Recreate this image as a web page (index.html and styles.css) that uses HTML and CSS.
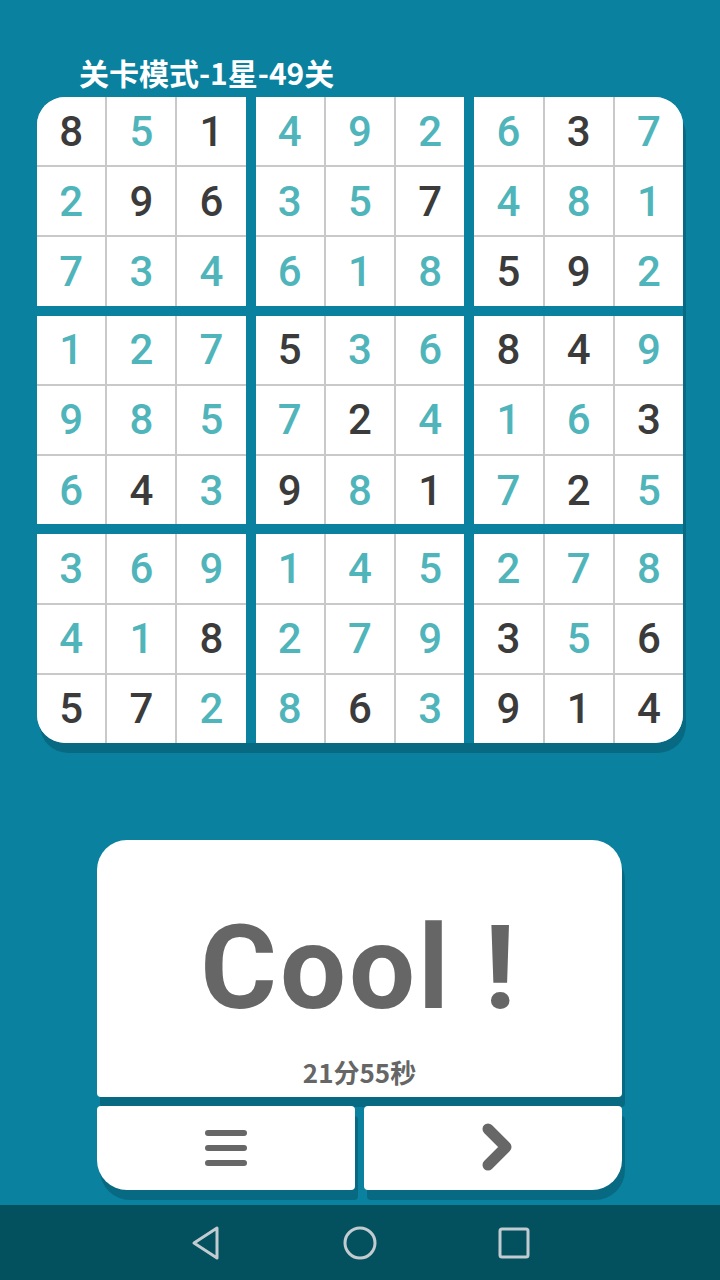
FILE: index.html
```html
<!DOCTYPE html>
<html lang="zh">
<head>
<meta charset="utf-8">
<link rel="stylesheet" href="styles.css">
</head>
<body>
<div class="screen">
  <div class="title">关卡模式-1星-49关</div>
  <div class="board">
    <div class="box"><div class="cell d">8</div><div class="cell t">5</div><div class="cell d">1</div><div class="cell t">2</div><div class="cell d">9</div><div class="cell d">6</div><div class="cell t">7</div><div class="cell t">3</div><div class="cell t">4</div></div>
    <div class="box"><div class="cell t">4</div><div class="cell t">9</div><div class="cell t">2</div><div class="cell t">3</div><div class="cell t">5</div><div class="cell d">7</div><div class="cell t">6</div><div class="cell t">1</div><div class="cell t">8</div></div>
    <div class="box"><div class="cell t">6</div><div class="cell d">3</div><div class="cell t">7</div><div class="cell t">4</div><div class="cell t">8</div><div class="cell t">1</div><div class="cell d">5</div><div class="cell d">9</div><div class="cell t">2</div></div>
    <div class="box"><div class="cell t">1</div><div class="cell t">2</div><div class="cell t">7</div><div class="cell t">9</div><div class="cell t">8</div><div class="cell t">5</div><div class="cell t">6</div><div class="cell d">4</div><div class="cell t">3</div></div>
    <div class="box"><div class="cell d">5</div><div class="cell t">3</div><div class="cell t">6</div><div class="cell t">7</div><div class="cell d">2</div><div class="cell t">4</div><div class="cell d">9</div><div class="cell t">8</div><div class="cell d">1</div></div>
    <div class="box"><div class="cell d">8</div><div class="cell d">4</div><div class="cell t">9</div><div class="cell t">1</div><div class="cell t">6</div><div class="cell d">3</div><div class="cell t">7</div><div class="cell d">2</div><div class="cell t">5</div></div>
    <div class="box"><div class="cell t">3</div><div class="cell t">6</div><div class="cell t">9</div><div class="cell t">4</div><div class="cell t">1</div><div class="cell d">8</div><div class="cell d">5</div><div class="cell d">7</div><div class="cell t">2</div></div>
    <div class="box"><div class="cell t">1</div><div class="cell t">4</div><div class="cell t">5</div><div class="cell t">2</div><div class="cell t">7</div><div class="cell t">9</div><div class="cell t">8</div><div class="cell d">6</div><div class="cell t">3</div></div>
    <div class="box"><div class="cell t">2</div><div class="cell t">7</div><div class="cell t">8</div><div class="cell d">3</div><div class="cell t">5</div><div class="cell d">6</div><div class="cell d">9</div><div class="cell d">1</div><div class="cell d">4</div></div>
  </div>
  <div class="result">
    <div class="card">
      <div class="cool">Cool !</div>
      <div class="time">21分55秒</div>
    </div>
    <div class="actions">
      <div class="btn btn-left">
        <svg width="44" height="40" viewBox="0 0 44 40"><g stroke="#676767" stroke-width="6" stroke-linecap="round"><line x1="4" y1="5" x2="40" y2="5"/><line x1="4" y1="20" x2="40" y2="20"/><line x1="4" y1="35" x2="40" y2="35"/></g></svg>
      </div>
      <div class="btn btn-right">
        <svg width="40" height="56" viewBox="0 0 40 56"><polyline points="15,9 33,27 15,45" fill="none" stroke="#676767" stroke-width="11" stroke-linecap="round" stroke-linejoin="round"/></svg>
      </div>
    </div>
  </div>
</div>
<div class="nav">
  <svg class="nav-icon" width="34" height="40" viewBox="0 0 34 40"><path d="M28 5 L28 35 L5 20 Z" fill="none" stroke="#c2ccd0" stroke-width="3" stroke-linejoin="round"/></svg>
  <svg class="nav-icon" width="34" height="40" viewBox="0 0 34 40"><circle cx="17" cy="20" r="15" fill="none" stroke="#c2ccd0" stroke-width="3"/></svg>
  <svg class="nav-icon" width="34" height="40" viewBox="0 0 34 40"><rect x="3" y="6" width="28" height="28" rx="2" fill="none" stroke="#c2ccd0" stroke-width="3"/></svg>
</div>
</body>
</html>
```
FILE: styles.css
```css
html, body {
  margin: 0;
  padding: 0;
}
body {
  width: 720px;
  height: 1280px;
  overflow: hidden;
  background: #0a819e;
  font-family: "Noto Sans CJK SC", "Noto Sans", sans-serif;
}
.screen {
  height: 1205px;
  display: flex;
  flex-direction: column;
}
.title {
  padding: 52px 0 0 79px;
  height: 40px;
  line-height: 40px;
  font-size: 30px;
  font-weight: 700;
  color: #ffffff;
}
.board {
  margin: 5px 0 0 37px;
  width: 646px;
  height: 646px;
  display: grid;
  grid-template-columns: repeat(3, 1fr);
  grid-template-rows: repeat(3, 1fr);
  gap: 10px;
  border-radius: 28px;
  overflow: hidden;
  box-shadow: 3px 10px 0 #086a82;
}
.box {
  display: grid;
  grid-template-columns: repeat(3, 1fr);
  grid-template-rows: repeat(3, 1fr);
  gap: 2px;
  background: #c9c9c9;
}
.cell {
  background: #ffffff;
  display: flex;
  align-items: center;
  justify-content: center;
  font-family: "Roboto", "Noto Sans", sans-serif;
  font-size: 42px;
  font-weight: 500;
}
.cell.d { color: #3b3b3b; }
.cell.t { color: #4fb5bb; }
.result {
  margin: 97px 0 0 97px;
  width: 525px;
}
.card {
  height: 257px;
  background: #ffffff;
  border-radius: 30px 30px 4px 4px;
  box-shadow: 3px 10px 0 #086a82;
  display: flex;
  flex-direction: column;
  align-items: center;
}
.cool {
  margin-top: 68px;
  font-family: "Roboto", "Noto Sans", sans-serif;
  font-weight: 700;
  font-size: 117px;
  line-height: 120px;
  height: 120px;
  color: #666666;
  letter-spacing: 3px;
}
.time {
  margin-top: 26px;
  font-size: 26px;
  font-weight: 700;
  line-height: 36px;
  color: #666666;
}
.actions {
  margin-top: 9px;
  display: grid;
  grid-template-columns: 1fr 1fr;
  gap: 9px;
}
.btn {
  height: 84px;
  background: #ffffff;
  display: flex;
  align-items: center;
  justify-content: center;
  box-shadow: 3px 10px 0 #086a82;
}
.btn-left { border-radius: 4px 4px 4px 30px; }
.btn-right { border-radius: 4px 4px 30px 4px; }
.nav {
  height: 75px;
  background: #03505f;
  display: flex;
  align-items: center;
  justify-content: center;
  gap: 120px;
}
```
